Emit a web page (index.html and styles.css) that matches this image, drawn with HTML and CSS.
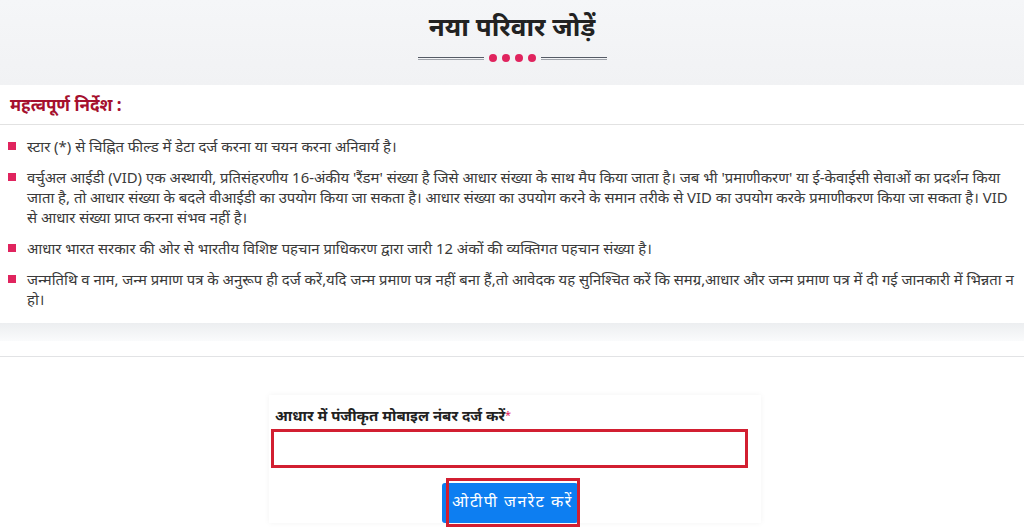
FILE: index.html
```html
<!DOCTYPE html>
<html lang="hi">
<head>
<meta charset="utf-8">
<title>नया परिवार जोड़ें</title>
<link rel="stylesheet" href="styles.css">
</head>
<body>
<header class="page-head">
  <h1 class="page-title">नया परिवार जोड़ें</h1>
  <div class="divider">
    <span class="divider-line"></span>
    <span class="dot"></span><span class="dot"></span><span class="dot"></span><span class="dot"></span>
    <span class="divider-line"></span>
  </div>
</header>

<section class="notice">
  <h2 class="notice-title">महत्वपूर्ण निर्देश :</h2>
  <ul class="notice-list">
    <li>स्टार (*) से चिह्नित फील्ड में डेटा दर्ज करना या चयन करना अनिवार्य है।</li>
    <li>वर्चुअल आईडी (VID) एक अस्थायी, प्रतिसंहरणीय 16-अंकीय 'रैंडम' संख्या है जिसे आधार संख्या के साथ मैप किया जाता है। जब भी 'प्रमाणीकरण' या ई-केवाईसी सेवाओं का प्रदर्शन किया जाता है, तो आधार संख्या के बदले वीआईडी का उपयोग किया जा सकता है। आधार संख्या का उपयोग करने के समान तरीके से VID का उपयोग करके प्रमाणीकरण किया जा सकता है। VID से आधार संख्या प्राप्त करना संभव नहीं है।</li>
    <li>आधार भारत सरकार की ओर से भारतीय विशिष्ट पहचान प्राधिकरण द्वारा जारी 12 अंकों की व्यक्तिगत पहचान संख्या है।</li>
    <li>जन्मतिथि व नाम, जन्म प्रमाण पत्र के अनुरूप ही दर्ज करें,यदि जन्म प्रमाण पत्र नहीं बना हैं,तो आवेदक यह सुनिश्चित करें कि समग्र,आधार और जन्म प्रमाण पत्र में दी गई जानकारी में भिन्नता न हो।</li>
  </ul>
</section>
<div class="band"></div>
<div class="sep"></div>

<main class="form-wrap">
  <div class="form-card">
    <label class="field-label" for="mobile">आधार में पंजीकृत मोबाइल नंबर दर्ज करें<span class="req">*</span></label>
    <div class="field-box"><input id="mobile" class="field-input" type="text"></div>
    <div class="actions">
      <button class="otp-btn" type="button">ओटीपी जनरेट करें<span class="mark"></span></button>
    </div>
  </div>
</main>
</body>
</html>
```

FILE: styles.css
```css
* { box-sizing: border-box; }
html, body { margin: 0; padding: 0; }
body {
  font-family: "Noto Sans", "DejaVu Sans", sans-serif;
  background: #fff;
  color: #333;
  overflow: hidden;
  height: 527px;
}
.page-head {
  height: 85px;
  background: linear-gradient(#f5f6f8, #f1f2f4);
  padding-top: 8px;
}
.page-title {
  margin: 0;
  text-align: center;
  font-size: 26px;
  line-height: 36px;
  font-weight: 700;
  color: #222;
}
.divider {
  margin-top: 10px;
  display: flex;
  justify-content: center;
  align-items: center;
  gap: 5px;
}
.divider-line {
  width: 66px;
  height: 3px;
  border-top: 1px solid #555b66;
  border-bottom: 1px solid #a0a4ab;
}
.dot {
  width: 8px;
  height: 8px;
  border-radius: 50%;
  background: #e0245e;
}
.notice {
  background: #fff;
  padding-bottom: 14px;
}
.notice-title {
  margin: 0;
  padding: 8px 10px 7px;
  font-size: 17px;
  line-height: 24px;
  font-weight: 700;
  color: #a5102e;
  border-bottom: 1px solid #e2e2e2;
}
.notice-list {
  list-style: none;
  margin: 0;
  padding: 11px 5px 0 27px;
}
.notice-list li {
  position: relative;
  font-size: 14.9px;
  line-height: 20px;
  color: #3a3a3a;
  margin-bottom: 11px;
}
.notice-list li:last-child { margin-bottom: 0; }
.notice-list li::before {
  content: "";
  position: absolute;
  left: -19px;
  top: 6px;
  width: 8px;
  height: 8px;
  background: #e0245e;
}
.band {
  height: 18px;
  background: linear-gradient(#eceef0, #fafbfc);
}
.sep {
  height: 16px;
  border-bottom: 1px solid #e2e3e5;
}
.form-wrap {
  display: flex;
  justify-content: center;
  padding-top: 38px;
  padding-left: 6px;
}
.form-card {
  width: 492px;
  padding: 10px 13px 0 2px;
  background: #fff;
  box-shadow: 0 0 6px rgba(0,0,0,0.05);
}
.field-label {
  display: block;
  padding-left: 4px;
  font-size: 15px;
  line-height: 20px;
  font-weight: 700;
  color: #222;
}
.req { color: #e0245e; font-weight: 400; font-size: 11px; vertical-align: top; }
.field-box {
  margin-top: 4px;
  height: 39px;
  border: 3px solid #d21f31;
  background: #fff;
  padding: 2px;
}
.field-input {
  width: 100%;
  height: 100%;
  border: 0;
  outline: 0;
  background: #fff;
}
.actions {
  display: flex;
  justify-content: center;
  padding-top: 15px;
}
.otp-btn {
  position: relative;
  height: 40px;
  width: 136px;
  border: 0;
  border-radius: 3px;
  background: #0d7ef1;
  color: #fff;
  font-family: "Noto Sans", "DejaVu Sans", sans-serif;
  font-size: 16px;
  letter-spacing: 1.5px;
  padding: 0 0 4px 6px;
  white-space: nowrap;
}
.mark {
  position: absolute;
  left: 4px;
  top: -5px;
  width: 134px;
  height: 52px;
  border: 3px solid #d21f31;
  border-bottom-width: 6px;
}
```
